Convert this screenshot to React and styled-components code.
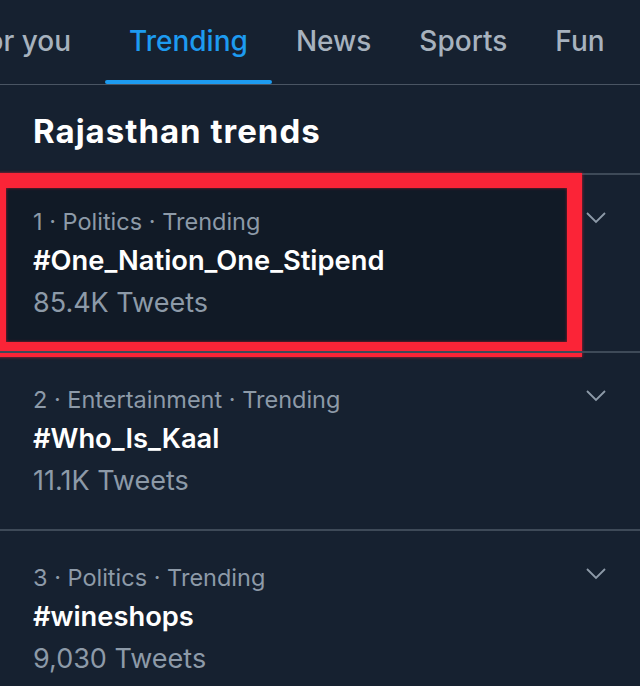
import React from "react";
import styled, { createGlobalStyle } from "styled-components";

const GlobalStyle = createGlobalStyle`
  html, body {
    margin: 0;
    padding: 0;
    background: #162130;
  }
  body {
    font-family: Inter, Roboto, "Noto Sans", "Liberation Sans", sans-serif;
    -webkit-font-smoothing: antialiased;
  }
`;

const Screen = styled.div`
  width: 640px;
  height: 686px;
  overflow: hidden;
  background: #162130;
  color: #ffffff;
`;

const TabBar = styled.nav`
  display: flex;
  height: 84px;
  border-bottom: 1px solid #4a5563;
  margin-left: -53px;
`;

const Tab = styled.div`
  position: relative;
  display: flex;
  align-items: center;
  padding: 0 24px 2px;
  margin-right: ${(p) => (p.lead ? "10px" : "0")};
  font-size: 28px;
  font-weight: 500;
  white-space: nowrap;
  color: ${(p) => (p.active ? "#1d9bf0" : "#a7b2be")};

  &::after {
    content: "";
    display: ${(p) => (p.active ? "block" : "none")};
    position: absolute;
    left: 0;
    right: 0;
    bottom: 0;
    height: 4px;
    border-radius: 2px;
    background: #1d9bf0;
  }
`;

const Heading = styled.h2`
  margin: 0;
  padding: 26px 33px 0;
  height: 62px;
  font-size: 33px;
  font-weight: 700;
  letter-spacing: 1px;
  color: #ffffff;
`;

const List = styled.div`
  display: flex;
  flex-direction: column;
`;

const Item = styled.div`
  position: relative;
  display: flex;
  justify-content: space-between;
  padding: 28px 33px 26px;
  border-top: 2px solid #3e4a58;
`;

const Info = styled.div`
  position: relative;
  z-index: 1;
  display: flex;
  flex-direction: column;
`;

const Meta = styled.div`
  font-size: 23.5px;
  line-height: 38px;
  color: #8d9aa8;
`;

const Tag = styled.div`
  font-size: 27.3px;
  font-weight: 600;
  line-height: 40px;
  color: #ffffff;
`;

const Count = styled.div`
  font-size: 27px;
  line-height: 44px;
  color: #8d9aa8;
`;

const Chevron = styled.svg`
  position: relative;
  z-index: 1;
  margin-top: 8px;
  flex: none;
`;

const Highlight = styled.div`
  position: absolute;
  left: -9px;
  top: -2px;
  width: 591px;
  height: 184px;
  box-sizing: border-box;
  border: 15px solid #fb2437;
  box-shadow: 0 0 3px rgba(255, 30, 50, 0.7), inset 0 0 3px rgba(255, 30, 50, 0.6);
  background: rgba(5, 10, 18, 0.3);
  pointer-events: none;
`;

const tabs = ["For you", "Trending", "News", "Sports", "Fun"];

const trends = [
  { rank: 1, category: "Politics", tag: "#One_Nation_One_Stipend", count: "85.4K Tweets", marked: true },
  { rank: 2, category: "Entertainment", tag: "#Who_Is_Kaal", count: "11.1K Tweets" },
  { rank: 3, category: "Politics", tag: "#wineshops", count: "9,030 Tweets" },
];

export default function App() {
  return (
    <>
      <GlobalStyle />
      <Screen>
        <TabBar>
          {tabs.map((t, i) => (
            <Tab key={t} lead={i === 0} active={t === "Trending"}>
              {t}
            </Tab>
          ))}
        </TabBar>
        <Heading>Rajasthan trends</Heading>
        <List>
          {trends.map((t) => (
            <Item key={t.rank}>
              {t.marked && <Highlight />}
              <Info>
                <Meta>
                  {t.rank} · {t.category} · Trending
                </Meta>
                <Tag>{t.tag}</Tag>
                <Count>{t.count}</Count>
              </Info>
              <Chevron width="22" height="14" viewBox="0 0 22 14">
                <path d="M2 2 L11 11 L20 2" fill="none" stroke="#8d9aa8" strokeWidth="1.8" />
              </Chevron>
            </Item>
          ))}
        </List>
      </Screen>
    </>
  );
}
